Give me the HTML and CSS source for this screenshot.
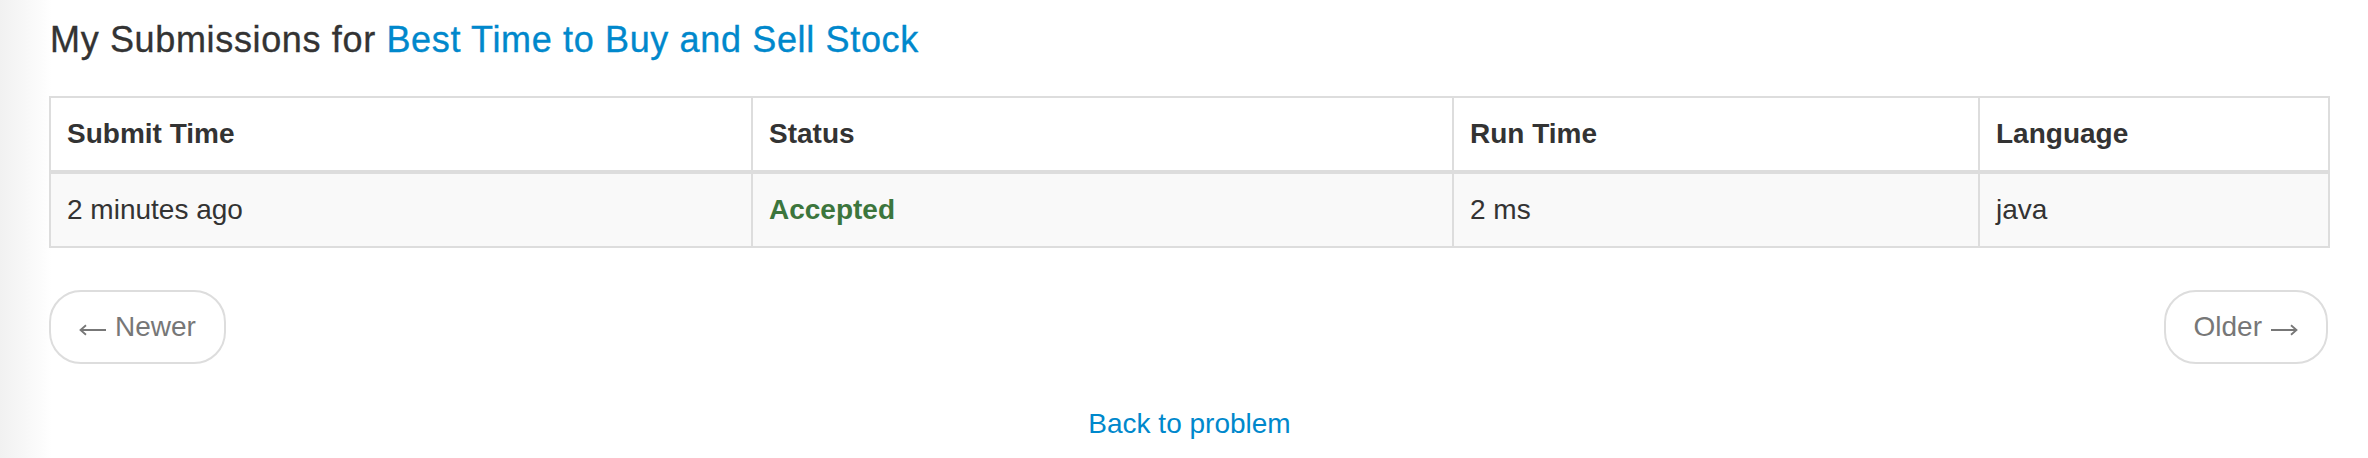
FILE: index.html
```html
<!DOCTYPE html>
<html lang="en">
<head>
<meta charset="utf-8">
<title>My Submissions</title>
<link rel="stylesheet" href="styles.css">
</head>
<body>
<div class="page">
  <h3 class="title">My Submissions for <a href="#" class="link">Best Time to Buy and Sell Stock</a></h3>
  <table class="subs">
    <colgroup>
      <col class="c1"><col class="c2"><col class="c3"><col class="c4">
    </colgroup>
    <thead>
      <tr><th>Submit Time</th><th>Status</th><th>Run Time</th><th>Language</th></tr>
    </thead>
    <tbody>
      <tr><td>2 minutes ago</td><td><a href="#" class="accepted">Accepted</a></td><td>2 ms</td><td>java</td></tr>
    </tbody>
  </table>
  <ul class="pager">
    <li><a href="#" class="pbtn"><svg class="arrow arrow-left" width="28" height="12" viewBox="0 0 28 12" aria-hidden="true"><path d="M27 6H1.5M7 1.2L1.5 6L7 10.8" fill="none" stroke="#777" stroke-width="1.8"/></svg>Newer</a></li>
    <li><a href="#" class="pbtn">Older<svg class="arrow arrow-right" width="28" height="12" viewBox="0 0 28 12" aria-hidden="true"><path d="M1 6H26.5M21 1.2L26.5 6L21 10.8" fill="none" stroke="#777" stroke-width="1.8"/></svg></a></li>
  </ul>
  <div class="back"><a href="#" class="link">Back to problem</a></div>
</div>
</body>
</html>
```

FILE: styles.css
```css
html, body {
  margin: 0;
  padding: 0;
}
body {
  background: linear-gradient(to right, #f1f1f1 0, #f6f6f6 20px, #ffffff 52px) no-repeat;
  background-color: #fff;
  font-family: "Liberation Sans", Arial, sans-serif;
  color: #333;
  font-size: 28px;
  line-height: 40px;
  height: 458px;
}
.page {
  margin-left: 49px;
  width: 2281px;
  padding-top: 20px;
}
.title {
  margin: 0 0 36px 1px;
  font-size: 36px;
  line-height: 40px;
  font-weight: normal;
  letter-spacing: 0.65px;
  -webkit-text-stroke: 0.35px currentColor;
  color: #333;
}
.link {
  color: #0088cc;
  text-decoration: none;
}
.subs {
  width: 2281px;
  border-collapse: collapse;
  table-layout: fixed;
  margin: 0;
}
.c1 { width: 702px; }
.c2 { width: 701px; }
.c3 { width: 526px; }
.c4 { width: 350px; }
.subs th, .subs td {
  border: 2px solid #ddd;
  padding: 16px;
  text-align: left;
  vertical-align: top;
  line-height: 40px;
}
.subs th {
  font-weight: bold;
  border-bottom-width: 4px;
}
.subs tbody tr {
  background: #f9f9f9;
}
.accepted {
  color: #3c763d;
  font-weight: bold;
  text-decoration: none;
}
.pager {
  list-style: none;
  margin: 42px 0 0 0;
  padding: 0;
  display: flex;
  justify-content: space-between;
  padding-right: 2px;
}
.pbtn {
  display: inline-flex;
  align-items: center;
  padding: 15px 28px;
  border: 2px solid #ddd;
  border-radius: 32px;
  color: #777;
  background: #fff;
  text-decoration: none;
  line-height: 40px;
}
.arrow {
  display: block;
  position: relative;
  top: 3px;
}
.arrow-left { margin-right: 8px; }
.arrow-right { margin-left: 8px; }
.back {
  text-align: center;
  margin-top: 40px;
}
```
